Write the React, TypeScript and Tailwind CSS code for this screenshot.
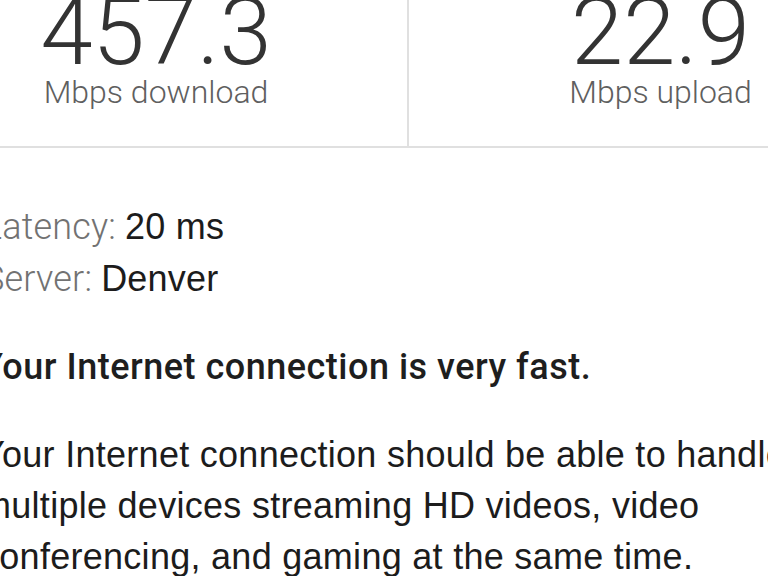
import React from "react";

const roboto = { fontFamily: '"Roboto", "Liberation Sans", sans-serif' };

export default function App() {
  return (
    <div className="w-[768px] h-[576px] overflow-hidden bg-white">
      <div className="-ml-[95px] w-[1010px]">
        <div className="flex h-[148px] border-b-2 border-[#e0e0e0]">
          <div className="w-[504px] h-full border-r-2 border-[#e0e0e0] flex flex-col items-center overflow-hidden">
            <div className="-mt-[9px] text-[94px] leading-[82px] font-light text-[#333333] font-['Roboto',sans-serif]">
              457.3
            </div>
            <div className="mt-[3px] text-[32px] leading-[32px] font-light text-[#5f5f5f] font-['Roboto',sans-serif]">
              Mbps download
            </div>
          </div>
          <div className="w-[503px] h-full flex flex-col items-center overflow-hidden">
            <div className="-mt-[9px] text-[94px] leading-[82px] font-light text-[#333333] font-['Roboto',sans-serif]">
              22.9
            </div>
            <div className="mt-[3px] text-[32px] leading-[32px] font-light text-[#5f5f5f] font-['Roboto',sans-serif]">
              Mbps upload
            </div>
          </div>
        </div>
        <div className="pl-[76px] pt-[53px] whitespace-nowrap font-['Liberation_Sans',Arial,sans-serif] text-[36px] leading-[51px] text-[#1c1c1c]">
          <div className="pl-[2px] tracking-[0.2px]">
            <span className="font-light text-[#727272]" style={roboto}>Latency: </span>
            <span>20 ms</span>
          </div>
          <div className="pl-[2px] tracking-[0.2px]">
            <span className="font-light text-[#727272]" style={roboto}>Server: </span>
            <span>Denver</span>
          </div>
          <div className="mt-[37px] font-medium tracking-[0.5px] text-[#1e1e1e] font-['Roboto',sans-serif]">
            Your Internet connection is very fast.
          </div>
          <div className="mt-[36px] tracking-[0.28px]">
            <div>Your Internet connection should be able to handle</div>
            <div>multiple devices streaming HD videos, video</div>
            <div>conferencing, and gaming at the same time.</div>
          </div>
        </div>
      </div>
    </div>
  );
}
